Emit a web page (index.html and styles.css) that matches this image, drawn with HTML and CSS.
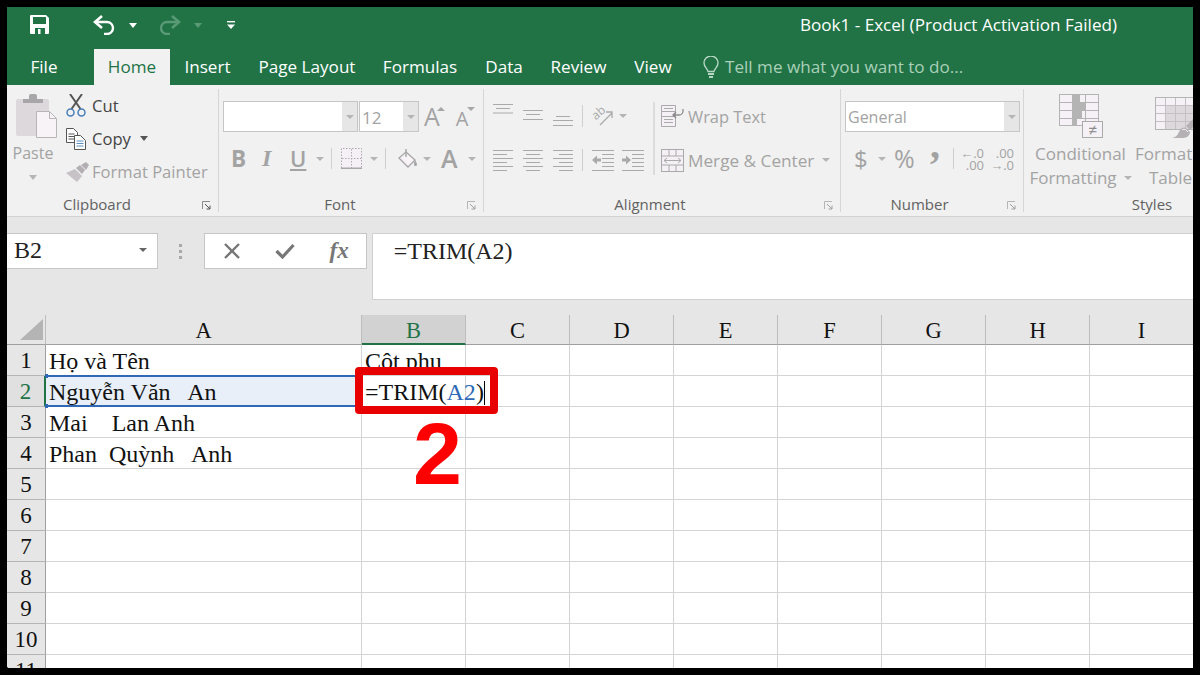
FILE: index.html
```html
<!DOCTYPE html>
<html lang="vi">
<head>
<meta charset="utf-8">
<title>Book1 - Excel</title>
<link rel="stylesheet" href="styles.css">
</head>
<body>
<div class="frame">
<div class="app">
  <header class="titlebar">
    <svg class="qat-save" width="20" height="20" viewBox="0 0 20 20"><path d="M1 0h15l3 3v15a1 1 0 0 1-1 1H1a1 1 0 0 1-1-1V1a1 1 0 0 1 1-1z" fill="#fff"/><rect x="3" y="2" width="13" height="7" fill="#217346"/><rect x="5" y="13" width="10" height="6" fill="#217346"/><rect x="8" y="14" width="2.5" height="5" fill="#fff"/></svg>
    <svg class="qat-undo" width="22" height="20" viewBox="0 0 22 20"><path d="M9 1L2 7l7 6" fill="none" stroke="#fff" stroke-width="2.6"/><path d="M2.5 7H14a6 6 0 0 1 0 12h-3" fill="none" stroke="#fff" stroke-width="2.4"/></svg>
    <svg class="qat-caret" width="8" height="5" viewBox="0 0 8 5"><path d="M0 0h8L4 5z" fill="#fff"/></svg>
    <svg class="qat-redo" width="22" height="20" viewBox="0 0 22 20"><path d="M13 1l7 6-7 6" fill="none" stroke="#5a9a76" stroke-width="2.6"/><path d="M19.5 7H8a6 6 0 0 0 0 12h3" fill="none" stroke="#5a9a76" stroke-width="2.4"/></svg>
    <svg class="qat-caret-dim" width="8" height="5" viewBox="0 0 8 5"><path d="M0 0h8L4 5z" fill="#5a9a76"/></svg>
    <svg class="qat-more" width="8" height="8" viewBox="0 0 8 8"><rect width="8" height="1.4" fill="#fff"/><path d="M0 3.4h8L4 8z" fill="#fff"/></svg>
    <div class="title">Book1 - Excel (Product Activation Failed)</div>
  </header>

  <nav class="tabs">
    <div class="tab t-file">File</div>
    <div class="tab t-home">Home</div>
    <div class="tab t-insert">Insert</div>
    <div class="tab t-layout">Page Layout</div>
    <div class="tab t-formulas">Formulas</div>
    <div class="tab t-data">Data</div>
    <div class="tab t-review">Review</div>
    <div class="tab t-view">View</div>
    <svg class="bulb" width="16" height="22" viewBox="0 0 16 22"><path d="M5 15.5C4.500 12.500 1 11 1 7a7 7 0 0 1 14 0c0 4-3.500 5.500-4 8.500z" fill="none" stroke="#b5d6c2" stroke-width="1.4"/><path d="M5 18h6M6 21h4" stroke="#b5d6c2" stroke-width="2"/></svg>
    <div class="tell">Tell me what you want to do...</div>
  </nav>

  <section class="ribbon">
    <div class="group g-clip">
      <div class="body clip-body">
        <div class="paste">
          <svg class="paste-icon" width="42" height="46" viewBox="0 0 42 46"><rect y="5" width="33" height="37" rx="2" fill="#dcd8dc"/><path d="M7 9V5h6V2a2 2 0 0 1 2-2h4a2 2 0 0 1 2 2v3h6v4z" fill="#a8a6a8"/><path d="M20.500 17.500h13l7 7v19h-20z" fill="#f7f3f7" stroke="#b8b4b8"/><path d="M33.500 17.500v7h7" fill="none" stroke="#b8b4b8"/></svg>
          <div class="paste-text dim">Paste</div>
          <svg class="paste-caret" width="8" height="5" viewBox="0 0 8 5"><path d="M0 0h8L4 5z" fill="#b5b5b5"/></svg>
        </div>
        <div class="clip-list">
          <div class="clip-row"><svg width="20" height="23" viewBox="0 0 20 23"><path d="M4 0l10.500 15M16 0L5.500 15" stroke="#555" stroke-width="2" fill="none"/><circle cx="4.500" cy="18.500" r="3.500" fill="none" stroke="#4a7ebb" stroke-width="1.500"/><circle cx="15.500" cy="18.500" r="3.500" fill="none" stroke="#4a7ebb" stroke-width="1.500"/></svg><span class="clip-text dark">Cut</span></div>
          <div class="clip-row"><svg width="20" height="22" viewBox="0 0 20 22"><path d="M.5.500h7l4 4v10h-11z" fill="#fff" stroke="#555"/><path d="M2.500 6h6M2.500 8.500h6M2.500 11h6" stroke="#555"/><path d="M8.500 7.500h6l5 5v9h-11z" fill="#fff" stroke="#555"/><path d="M10.500 13h7M10.500 15.500h7M10.500 18h7" stroke="#5a8ec5"/></svg><span class="clip-text dark">Copy</span><svg class="copy-caret" width="8" height="5" viewBox="0 0 8 5"><path d="M0 0h8L4 5z" fill="#555"/></svg></div>
          <div class="clip-row"><svg width="23" height="20" viewBox="0 0 23 20"><path d="M0 11l9-4 7 7-5 6z" fill="#c6c2c6"/><path d="M10 6l4-3 5 5-3 4z" fill="#b2aeb2"/><path d="M15 3l5-3 3 3-3 5z" fill="#b2aeb2"/></svg><span class="clip-text dim">Format Painter</span></div>
        </div>
      </div>
      <div class="label-row lab-clip"><span class="label">Clipboard</span><svg class="launch" width="9" height="9" viewBox="0 0 9 9"><path d="M.5 8V.5H8" fill="none" stroke="#8a8a8a"/><path d="M3 3l5 5M8 4.500V8H4.500" fill="none" stroke="#555"/></svg></div>
    </div>

    <div class="group g-font">
      <div class="body font-body">
        <div class="font-row1">
          <div class="combo c-name"><span class="combo-val"></span><span class="combo-btn"><svg width="8" height="4" viewBox="0 0 8 4"><path d="M0 0h8L4 4z" fill="#b5b5b5"/></svg></span></div>
          <div class="combo c-size"><span class="combo-val val-size">12</span><span class="combo-btn"><svg width="8" height="4" viewBox="0 0 8 4"><path d="M0 0h8L4 4z" fill="#b5b5b5"/></svg></span></div>
          <span class="grow-a">A</span><svg class="tri-up" width="8" height="4" viewBox="0 0 8 4"><path d="M0 4h8L4 0z" fill="#a6a6a6"/></svg>
          <span class="shrink-a">A</span><svg class="tri-down" width="8" height="4" viewBox="0 0 8 4"><path d="M0 0h8L4 4z" fill="#a6a6a6"/></svg>
        </div>
        <div class="font-row2">
          <b class="fmt">B</b>
          <i class="fmt fmt-i">I</i>
          <span class="fmt fmt-u">U</span>
          <svg width="8" height="4" viewBox="0 0 8 4"><path d="M0 0h8L4 4z" fill="#b5b5b5"/></svg>
          <span class="vsep"></span>
          <svg width="21" height="21" viewBox="0 0 21 21"><path d="M.5 20V.5h20V20" fill="#f5f0f5" stroke="#b0a8b0" stroke-dasharray="1.500 1.500"/><path d="M10.500 1v19M1 10.500h19" stroke="#b0a8b0" stroke-dasharray="1.500 1.500"/><path d="M0 20.200h21" stroke="#a8a8a8" stroke-width="1.600"/></svg>
          <svg width="8" height="4" viewBox="0 0 8 4"><path d="M0 0h8L4 4z" fill="#b5b5b5"/></svg>
          <span class="vsep"></span>
          <svg width="21" height="21" viewBox="0 0 21 21"><path d="M9 4l9 8-7 7-9-9z" fill="#f7f3f7" stroke="#a6a6a6" stroke-width="1.300"/><path d="M9 1v8" stroke="#a6a6a6" stroke-width="1.400"/><path d="M18 12c1.200 2 2 3 2 4.500a1.500 1.500 0 0 1-3 0c0-1 .1-3 1-4.500z" fill="#a6a6a6"/></svg>
          <svg width="8" height="4" viewBox="0 0 8 4"><path d="M0 0h8L4 4z" fill="#b5b5b5"/></svg>
          <span class="fmt-a">A</span>
          <svg width="8" height="4" viewBox="0 0 8 4"><path d="M0 0h8L4 4z" fill="#b5b5b5"/></svg>
        </div>
      </div>
      <div class="label-row lab-font"><span class="label">Font</span><svg class="launch" width="9" height="9" viewBox="0 0 9 9"><path d="M.5 8V.5H8" fill="none" stroke="#b5b5b5"/><path d="M3 3l5 5M8 4.500V8H4.500" fill="none" stroke="#a0a0a0"/></svg></div>
    </div>

    <div class="group g-align">
      <div class="body align-body">
        <div class="align-left">
          <div class="align-row1">
            <svg width="20" height="24" viewBox="0 0 20 24"><path d="M0 .5h20M3 4.500h14M0 9h20" stroke="#aaa"/></svg>
            <svg width="20" height="24" viewBox="0 0 20 24"><path d="M0 6.500h20M3 10.500h14M0 15.500h20" stroke="#aaa"/></svg>
            <svg width="20" height="24" viewBox="0 0 20 24"><path d="M3 12.500h14M0 16.500h20M0 21.500h20" stroke="#aaa"/></svg>
            <span class="vsep vsep-top"></span>
            <svg width="20" height="20" viewBox="0 0 20 20"><text class="orient" x="0" y="11" transform="rotate(-40 6 9)">ab</text><path d="M7 19L19 7M13 6h6v6" fill="none" stroke="#aaa" stroke-width="1.300"/></svg>
            <svg width="8" height="4" viewBox="0 0 8 4"><path d="M0 0h8L4 4z" fill="#b5b5b5"/></svg>
          </div>
          <div class="align-row2">
            <svg width="20" height="22" viewBox="0 0 20 22"><path d="M0 1.500h20M0 5.500h14M0 9.500h20M0 13.500h14M0 17.500h20M0 21.500h14" stroke="#aaa"/></svg>
            <svg width="20" height="22" viewBox="0 0 20 22"><path d="M0 1.500h20M3 5.500h14M0 9.500h20M3 13.500h14M0 17.500h20M3 21.500h14" stroke="#aaa"/></svg>
            <svg width="20" height="22" viewBox="0 0 20 22"><path d="M0 1.500h20M6 5.500h14M0 9.500h20M6 13.500h14M0 17.500h20M6 21.500h14" stroke="#aaa"/></svg>
            <span class="vsep vsep-top"></span>
            <svg width="22" height="22" viewBox="0 0 22 22"><path d="M0 1.500h22M10 5.500h12M10 9.500h12M10 13.500h12M10 17.500h12M0 21.500h22" stroke="#aaa"/><path d="M0 11l5-4.500v3h4v3H5v3z" fill="#aaa"/></svg>
            <svg width="22" height="22" viewBox="0 0 22 22"><path d="M0 1.500h22M10 5.500h12M10 9.500h12M10 13.500h12M10 17.500h12M0 21.500h22" stroke="#aaa"/><path d="M9 11L4 6.500v3H0v3h4v3z" fill="#aaa"/></svg>
          </div>
        </div>
        <span class="align-sep"></span>
        <div class="align-right">
          <div class="wm-row wm-wrap"><svg width="23" height="22" viewBox="0 0 23 22"><path d="M.5.500h14v6H.5zM.5 6.500h14v5H.5zM.5 11.500h14v10H.5z" fill="#f5f0f5" stroke="#aaa"/><path d="M3 14.500h9M3 17.500h9M3 3.500h9" stroke="#aaa"/><path d="M22 4v2a4 4 0 0 1-4 4h-6M15 7l-3 3 3 3" fill="none" stroke="#8a8a8a" stroke-width="1.300"/></svg><span class="wm-text text-wrap dim">Wrap Text</span></div>
          <div class="wm-row"><svg width="23" height="23" viewBox="0 0 23 23"><rect x=".5" y=".5" width="22" height="22" fill="#f5f0f5" stroke="#aaa"/><path d="M1 7h21M1 16h21M8 .5V7M15 .5V7M8 16v6.500M15 16v6.500" stroke="#aaa"/><path d="M3 11.500h17M6 9l-3 2.500L6 14M17 9l3 2.500-3 2.500" fill="none" stroke="#aaa"/></svg><span class="wm-text text-merge dim">Merge &amp; Center</span><svg class="merge-caret" width="8" height="4" viewBox="0 0 8 4"><path d="M0 0h8L4 4z" fill="#b5b5b5"/></svg></div>
        </div>
      </div>
      <div class="label-row lab-align"><span class="label">Alignment</span><svg class="launch" width="9" height="9" viewBox="0 0 9 9"><path d="M.5 8V.5H8" fill="none" stroke="#b5b5b5"/><path d="M3 3l5 5M8 4.500V8H4.500" fill="none" stroke="#a0a0a0"/></svg></div>
    </div>

    <div class="group g-num">
      <div class="body num-body">
        <div class="combo c-num"><span class="combo-val">General</span><span class="combo-btn"><svg width="8" height="4" viewBox="0 0 8 4"><path d="M0 0h8L4 4z" fill="#b5b5b5"/></svg></span></div>
        <div class="num-row2">
          <span class="num-sym">$</span>
          <svg width="8" height="4" viewBox="0 0 8 4"><path d="M0 0h8L4 4z" fill="#b5b5b5"/></svg>
          <span class="num-pct">%</span>
          <span class="num-comma">,</span>
          <span class="vsep"></span>
          <span class="dec"><span>←.0</span><span>.00</span></span>
          <span class="dec"><span>.00</span><span>→.0</span></span>
        </div>
      </div>
      <div class="label-row lab-num"><span class="label">Number</span><svg class="launch" width="9" height="9" viewBox="0 0 9 9"><path d="M.5 8V.5H8" fill="none" stroke="#b5b5b5"/><path d="M3 3l5 5M8 4.500V8H4.500" fill="none" stroke="#a0a0a0"/></svg></div>
    </div>

    <div class="group g-styles">
      <div class="body styles-body">
        <div class="style-col col-cond">
          <svg width="44" height="44" viewBox="0 0 44 44"><rect x=".5" y=".5" width="39" height="31" fill="#f6f1f6" stroke="#b4b4b4"/><path d="M13 1h8v7h6v8h-4v8h-5v8h-5z" fill="#b4b4b4"/><path d="M13.500 1v30M26.500 1v30M1 8.500h38M1 16.500h38M1 24.500h38" stroke="#b4b4b4" fill="none"/><rect x="23.500" y="27.500" width="20" height="16" fill="#f6f1f6" stroke="#aaa"/><text class="ne" x="33.500" y="41" text-anchor="middle">≠</text></svg>
          <div class="style-text dim">Conditional</div>
          <div class="style-text dim">Formatting <svg class="fmt-caret" width="8" height="4" viewBox="0 0 8 4"><path d="M0 0h8L4 4z" fill="#b5b5b5"/></svg></div>
        </div>
        <div class="style-col col-table">
          <svg class="table-icon" width="52" height="42" viewBox="0 0 52 42"><rect x=".5" y=".5" width="50" height="32" fill="#f6f1f6" stroke="#b4b4b4"/><path d="M10 8h41v24H10z" fill="#dcd8dc"/><path d="M10.500 1v31M20.500 1v31M30.500 1v31M40.500 1v31M1 8.500h49M1 16.500h49M1 24.500h49" stroke="#c4c0c4" fill="none"/><path d="M17 41c5-1 6-4 8-8 1-2 4-3 6-2l4 4c0 3-3 6-7 6z" fill="#b4b0b4"/><path d="M27 33c1-1 3-1 4 0l2 2" fill="none" stroke="#f1f1f1"/><path d="M31 29l14-14 4 4-14 14z" fill="#b4b0b4"/></svg>
          <div class="style-text text-format dim">Format as</div>
          <div class="style-text text-table dim">Table</div>
        </div>
      </div>
      <div class="label-row lab-styles"><span class="label">Styles</span></div>
    </div>
  </section>

  <section class="formula">
    <div class="namebox"><span>B2</span><svg width="8" height="4" viewBox="0 0 8 4"><path d="M0 0h8L4 4z" fill="#666"/></svg></div>
    <div class="grip"><i></i><i></i><i></i></div>
    <div class="fbtns">
      <svg width="18" height="16" viewBox="0 0 18 16"><path d="M2 1l14 14M16 1L2 15" stroke="#777" stroke-width="2.400"/></svg>
      <svg width="20" height="16" viewBox="0 0 20 16"><path d="M1.500 8l6 6L18.500 2" fill="none" stroke="#777" stroke-width="3.200"/></svg>
      <span class="fx">fx</span>
    </div>
    <div class="finput">=TRIM(A2)</div>
  </section>

  <section class="sheet">
    <div class="ch corner"><svg width="23" height="21" viewBox="0 0 23 21"><path d="M23 0v21H0z" fill="#b4b4b4"/></svg></div>
    <div class="ch">A</div><div class="ch ch-sel">B</div><div class="ch">C</div><div class="ch">D</div><div class="ch">E</div><div class="ch">F</div><div class="ch">G</div><div class="ch">H</div><div class="ch">I</div>

    <div class="rh">1</div><div class="cell">Họ và Tên</div><div class="cell">Cột phụ</div><div class="cell"></div><div class="cell"></div><div class="cell"></div><div class="cell"></div><div class="cell"></div><div class="cell"></div><div class="cell"></div>
    <div class="rh rh-sel">2</div><div class="cell cell-ref">Nguyễn Văn&nbsp;&nbsp; An</div><div class="cell cell-edit">=TRIM(<span class="ref">A2</span>)<span class="caret"></span></div><div class="cell"></div><div class="cell"></div><div class="cell"></div><div class="cell"></div><div class="cell"></div><div class="cell"></div><div class="cell"></div>
    <div class="rh">3</div><div class="cell">Mai&nbsp;&nbsp;&nbsp; Lan Anh</div><div class="cell"></div><div class="cell"></div><div class="cell"></div><div class="cell"></div><div class="cell"></div><div class="cell"></div><div class="cell"></div><div class="cell"></div>
    <div class="rh">4</div><div class="cell">Phan&nbsp; Quỳnh&nbsp;&nbsp; Anh</div><div class="cell"></div><div class="cell"></div><div class="cell"></div><div class="cell"></div><div class="cell"></div><div class="cell"></div><div class="cell"></div><div class="cell"></div>
    <div class="rh">5</div><div class="cell"></div><div class="cell"></div><div class="cell"></div><div class="cell"></div><div class="cell"></div><div class="cell"></div><div class="cell"></div><div class="cell"></div><div class="cell"></div>
    <div class="rh">6</div><div class="cell"></div><div class="cell"></div><div class="cell"></div><div class="cell"></div><div class="cell"></div><div class="cell"></div><div class="cell"></div><div class="cell"></div><div class="cell"></div>
    <div class="rh">7</div><div class="cell"></div><div class="cell"></div><div class="cell"></div><div class="cell"></div><div class="cell"></div><div class="cell"></div><div class="cell"></div><div class="cell"></div><div class="cell"></div>
    <div class="rh">8</div><div class="cell"></div><div class="cell"></div><div class="cell"></div><div class="cell"></div><div class="cell"></div><div class="cell"></div><div class="cell"></div><div class="cell"></div><div class="cell"></div>
    <div class="rh">9</div><div class="cell"></div><div class="cell"></div><div class="cell"></div><div class="cell"></div><div class="cell"></div><div class="cell"></div><div class="cell"></div><div class="cell"></div><div class="cell"></div>
    <div class="rh">10</div><div class="cell"></div><div class="cell"></div><div class="cell"></div><div class="cell"></div><div class="cell"></div><div class="cell"></div><div class="cell"></div><div class="cell"></div><div class="cell"></div>
    <div class="rh">11</div><div class="cell"></div><div class="cell"></div><div class="cell"></div><div class="cell"></div><div class="cell"></div><div class="cell"></div><div class="cell"></div><div class="cell"></div><div class="cell"></div>

    <div class="callout-box"></div>
    <div class="callout-num">2</div>
  </section>
</div>
</div>
</body>
</html>
```

FILE: styles.css
```css
* { box-sizing: border-box; }
html, body { margin: 0; padding: 0; }
body { background: #000; font-family: "Open Sans", "Noto Sans", sans-serif; }
svg { display: block; flex: none; }

.frame { width: 1200px; height: 675px; background: #000; padding: 7px; overflow: hidden; }
.app { width: 1186px; height: 661px; display: flex; flex-direction: column; overflow: hidden; border-radius: 0 0 0 3px; background: #fff; }

.dim { color: #a3a3a3; }
.dark { color: #444; }

/* title bar */
.titlebar { height: 42px; flex: none; background: #217346; display: flex; align-items: center; padding-left: 23px; }
.qat-save { margin-top: -6px; }
.qat-undo { margin-left: 43px; margin-top: -6px; }
.qat-caret { margin-left: 14px; margin-top: -6px; }
.qat-redo { margin-left: 22px; margin-top: -6px; }
.qat-caret-dim { margin-left: 13px; margin-top: -6px; }
.qat-more { margin-left: 25px; margin-top: -6px; }
.title { margin-left: auto; margin-right: 76px; margin-top: -8px; font-size: 17.1px; color: #fff; white-space: nowrap; }

/* tabs */
.tabs { height: 36px; flex: none; background: #217346; display: flex; align-items: stretch; padding-left: 10px; color: #fff; font-size: 17.1px; }
.tab { display: flex; align-items: center; justify-content: center; flex: none; white-space: nowrap; padding-bottom: 2px; }
.t-file { width: 54px; margin-right: 23px; }
.t-home { width: 76px; background: #f1f1f1; color: #217346; }
.t-insert { width: 75px; }
.t-layout { width: 124px; }
.t-formulas { width: 102px; }
.t-data { width: 66px; }
.t-review { width: 83px; }
.t-view { width: 66px; }
.bulb { align-self: center; margin-left: 17px; }
.tell { align-self: center; margin-left: 6px; padding-bottom: 2px; color: #a9d0b8; white-space: nowrap; }

/* ribbon */
.ribbon { height: 132px; flex: none; background: #f1f1f1; border-bottom: 1px solid #d2d2d2; display: flex; overflow: hidden; }
.group { flex: none; display: flex; flex-direction: column; position: relative; }
.group::after { content: ""; position: absolute; right: 0; top: 4px; bottom: 4px; width: 1px; background: #d6d6d6; }
.g-clip { width: 212px; }
.g-font { width: 265px; }
.g-align { width: 357px; }
.g-num { width: 183px; }
.g-styles { width: 256px; }
.g-styles::after { display: none; }
.body { flex: 1; min-height: 0; }
.label-row { height: 24px; flex: none; display: flex; align-items: center; }
.label { flex: 1; text-align: center; font-size: 15px; color: #626262; white-space: nowrap; }
.launch { margin-right: 8px; margin-top: 2px; }
.lab-clip .label { padding-right: 15px; }
.lab-font .label { padding-right: 6px; }
.lab-align .label { padding-right: 8px; }
.lab-num .label { padding-right: 9px; }

.clip-body { display: flex; padding-left: 2px; }
.paste { width: 48px; display: flex; flex-direction: column; }
.paste-icon { margin: 9px 0 0 7px; }
.paste-text { font-size: 16px; text-align: center; line-height: 24px; margin-top: 1px; }
.paste-caret { margin: 10px 0 0 20px; }
.clip-list { margin-left: 9px; padding-top: 4px; }
.clip-row { height: 33px; display: grid; grid-template-columns: 26px auto auto; justify-content: start; align-items: center; }
.clip-text { font-size: 16.6px; white-space: nowrap; }
.copy-caret { margin-left: 9px; }

.font-body { padding: 16px 0 0 4px; }
.font-row1 { height: 31px; display: flex; align-items: center; }
.combo { height: 31px; display: flex; background: #fff; border: 1px solid #c6c6c6; flex: none; }
.combo-val { flex: 1; padding: 1px 0 0 2px; font-size: 16px; line-height: 29px; color: #a3a3a3; }
.val-size { font-size: 17px; }
.combo-btn { width: 15px; background: #e6e6e6; display: flex; align-items: center; justify-content: center; }
.c-name { width: 135px; }
.c-size { width: 60px; margin-left: 1px; }
.grow-a { margin-left: 5px; font-size: 25px; line-height: 31px; color: #a3a3a3; }
.tri-up { margin: -15px 0 0 -3px; }
.shrink-a { margin-left: 11px; font-size: 20px; line-height: 31px; color: #a3a3a3; padding-top: 3px; }
.tri-down { margin: -15px 0 0 -1px; }

.font-row2 { display: grid; grid-template-columns: 31px 28px 26px 15px 10px 29px 15px 12px 26px 18px 27px 8px; align-items: center; justify-items: start; height: 27px; margin: 13px 0 0 8px; }
.fmt { font-size: 22px; color: #a3a3a3; line-height: 27px; }
.font-row2 b { font-size: 22.5px; }
.fmt-i { font-family: "Liberation Serif", serif; font-weight: 700; font-size: 24px; }
.fmt-u { text-decoration: underline; font-weight: 600; }
.fmt-a { font-size: 25px; font-weight: 600; color: #a3a3a3; line-height: 27px; }
.vsep { width: 1px; height: 21px; background: #cfcfcf; display: block; }
.vsep-top { height: 22px; }

.align-body { display: flex; padding-left: 9px; }
.align-left { width: 160px; }
.align-row1 { display: grid; grid-template-columns: 30px 30px 29px 11px 26px 8px; align-items: center; justify-items: start; height: 24px; margin-top: 19px; }
.align-row2 { display: grid; grid-template-columns: 30px 30px 29px 10px 30px 22px; align-items: center; justify-items: start; height: 24px; margin-top: 20px; }
.orient { font-size: 12px; fill: #aaa; font-family: "Open Sans", sans-serif; }
.align-sep { width: 2px; height: 73px; margin-top: 17px; background: #dcdcdc; flex: none; }
.align-right { margin-left: 6px; padding-top: 19px; }
.wm-row { height: 24px; display: flex; align-items: center; margin-bottom: 20px; }
.wm-text { margin-left: 4px; white-space: nowrap; }
.text-wrap { font-size: 16.4px; }
.text-merge { font-size: 17.2px; }
.merge-caret { margin-left: 8px; }

.num-body { padding: 16px 0 0 4px; }
.c-num { width: 175px; }
.num-row2 { display: grid; grid-template-columns: 24px 16px 36px 23px 10px 30px 21px; align-items: center; justify-items: start; height: 27px; margin: 13px 0 0 9px; color: #a3a3a3; }
.num-sym { font-size: 24px; line-height: 27px; }
.num-pct { font-size: 25px; line-height: 27px; }
.num-comma { font-family: "Liberation Serif", serif; font-size: 40px; font-weight: 700; line-height: 20px; margin-top: -27px; }
.dec { display: flex; flex-direction: column; font-size: 13px; line-height: 12px; align-items: flex-end; white-space: nowrap; width: 21px; }

.styles-body { display: flex; padding: 9px 0 0 4px; }
.style-col { display: flex; flex-direction: column; align-items: center; flex: none; }
.col-cond { width: 105px; }
.col-table { width: 72px; align-items: flex-start; }
.table-icon { margin: 3px 0 -1px 22px; }
.style-text { font-size: 17px; line-height: 24px; white-space: nowrap; display: flex; align-items: center; }
.col-cond .style-text:nth-child(2), .col-table .style-text:nth-child(2) { margin-top: 4px; }
.text-format { margin-left: 2px; }
.text-table { margin-left: 16px; }
.fmt-caret { margin-left: 7px; }
.ne { font-size: 15px; fill: #8a8a8a; font-family: "Liberation Sans", sans-serif; }

/* formula bar */
.formula { height: 98px; flex: none; background: #e6e6e6; display: flex; align-items: flex-start; padding-top: 16px; font-family: "Liberation Serif", serif; }
.namebox { width: 152px; height: 36px; background: #fff; border: 1px solid #c6c6c6; border-left: 0; display: flex; align-items: center; justify-content: space-between; padding: 0 10px 2px 7px; font-size: 24px; color: #222; }
.grip { width: 47px; height: 36px; display: flex; flex-direction: column; align-items: center; justify-content: center; gap: 3px; }
.grip i { display: block; width: 3px; height: 3px; background: #a8a8a8; }
.fbtns { width: 164px; height: 36px; background: #fff; border: 1px solid #c6c6c6; display: flex; align-items: center; justify-content: space-between; padding: 0 17px 0 18px; }
.fx { font-size: 23px; font-style: italic; font-weight: 700; color: #777; }
.finput { width: 830px; height: 67px; margin-left: 5px; background: #fff; border: 1px solid #d0d0d0; border-right: 0; padding: 0 0 0 21px; font-size: 24px; color: #222; line-height: 34px; }

/* sheet */
.sheet { flex: 1; min-height: 0; overflow: hidden; position: relative; background: #fff; display: grid; grid-template-columns: 39px 316px 104px 104px 104px 104px 104px 104px 104px 104px; grid-template-rows: 30px repeat(11, 31px); font-family: "Liberation Serif", serif; font-size: 24px; color: #111; }
.ch { background: #e6e6e6; border-right: 1px solid #bdbdbd; border-bottom: 1px solid #9f9f9f; display: flex; align-items: center; justify-content: center; line-height: 30px; font-size: 22.5px; padding-top: 3px; }
.corner { justify-content: flex-end; padding: 0 2px 0 0; }
.ch-sel { background: #d2d2d2; color: #217346; border-bottom: 2px solid #217346; }
.rh { background: #e6e6e6; border-right: 1px solid #9f9f9f; border-bottom: 1px solid #b5b5b5; display: flex; align-items: center; justify-content: center; font-size: 23px; padding-top: 2px; }
.rh-sel { color: #217346; border-right: 2px solid #217346; background: #e0e0e0; }
.cell { border-right: 1px solid #d4d4d4; border-bottom: 1px solid #d4d4d4; padding: 1px 0 0 3px; white-space: nowrap; line-height: 30px; overflow: visible; }
.cell-ref { background: #e8eff9; border-top: 2px solid #2f69b5; border-bottom: 2px solid #2f69b5; margin-top: -1px; padding-top: 0; line-height: 30px; position: relative; border-right: 0; }
.cell-ref::before, .cell-ref::after { content: ""; position: absolute; left: -1px; width: 3px; height: 4px; background: #2f69b5; }
.cell-ref::before { top: -3px; }
.cell-ref::after { bottom: -3px; }
.cell-edit { background: #fff; position: relative; padding-top: 2px; line-height: 29px; }
.ref { color: #2f69b5; }
.caret { display: inline-block; width: 1px; height: 24px; background: #000; vertical-align: -5px; }

/* annotation */
.callout-box { position: absolute; left: 348px; top: 52px; width: 143px; height: 47px; border: 8px solid #e80000; border-radius: 4px; }
.callout-num { position: absolute; left: 406px; top: 91px; font-family: "Liberation Sans", sans-serif; font-weight: 700; font-size: 88px; line-height: 96px; color: #fe0000; }
```
